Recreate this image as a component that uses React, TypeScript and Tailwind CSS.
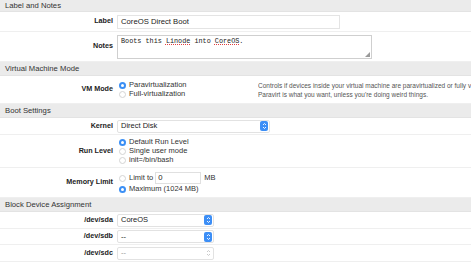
import React from "react";

const Header: React.FC<{ title: string; h?: string }> = ({ title, h = "h-[14px]" }) => (
  <div className={`${h} bg-[#ebebeb] border-b border-[#e3e3e3] pl-[5px] flex items-center text-[7.7px] text-[#333]`}>
    {title}
  </div>
);

const Row: React.FC<{ label: string; h: string; children: React.ReactNode }> = ({ label, h, children }) => (
  <div className={`${h} flex items-center border-b border-[#efefef]`}>
    <div className="w-[113px] shrink-0 text-right font-bold text-[7.2px] text-[#222]">{label}</div>
    <div className="pl-[4px] flex-1 min-w-0">{children}</div>
  </div>
);

const Radio: React.FC<{ on?: boolean; label: string }> = ({ on, label }) => (
  <div className="flex items-center h-[9px] pl-[2px]">
    {on ? (
      <span className="w-[7px] h-[7px] rounded-full bg-[#3b8ff5] flex items-center justify-center">
        <span className="w-[3px] h-[3px] rounded-full bg-white" />
      </span>
    ) : (
      <span className="w-[7px] h-[7px] rounded-full border border-[#d4d4d4] bg-white" />
    )}
    <span className="ml-[3px] text-[7.5px] text-[#333]">{label}</span>
  </div>
);

const Stepper: React.FC<{ off?: boolean }> = ({ off }) => (
  <span
    className={`w-[8px] h-[10px] rounded-[2px] flex items-center justify-center ${
      off ? "bg-transparent" : "bg-[#3c8ef6]"
    }`}
  >
    <svg width="5" height="8" viewBox="0 0 5 8">
      <path d="M1 3 L2.5 1.5 L4 3 M1 5 L2.5 6.5 L4 5" fill="none" stroke={off ? "#c4c4c4" : "#fff"} strokeWidth="0.9" />
    </svg>
  </span>
);

const Select: React.FC<{ value: string; w: string; off?: boolean }> = ({ value, w, off }) => (
  <div className={`${w} h-[13px] border border-[#e2e2e2] bg-white rounded-[2px] flex items-center justify-between pl-[3px] pr-[1px]`}>
    <span className={`text-[7.5px] ${off ? "text-[#999]" : "text-[#222]"}`}>{value}</span>
    <Stepper off={off} />
  </div>
);

export default function App() {
  return (
    <div className="w-[471px] h-[265px] overflow-hidden bg-white" style={{ fontFamily: '"Liberation Sans", Arial, sans-serif' }}>
      <Header title="Label and Notes" h="h-[12px]" />
      <Row label="Label" h="h-[20px]">
        <div className="w-[223px] h-[14px] border border-[#e4e4e4] flex items-center pl-[3px] text-[7.7px] text-[#222]">
          CoreOS Direct Boot
        </div>
      </Row>
      <Row label="Notes" h="h-[30px]">
        <div className="relative w-[255px] h-[24px] border border-[#cfcfcf] pl-[3px] pt-[1px] text-[6.8px] text-[#222] leading-[8px]" style={{ fontFamily: '"Liberation Mono", "Courier New", monospace' }}>
          Boots this <span className="underline decoration-dotted decoration-[#e04040]">Linode</span> into{" "}
          <span className="underline decoration-dotted decoration-[#e04040]">CoreOS</span>.
          <svg className="absolute right-[1px] bottom-[1px]" width="5" height="5" viewBox="0 0 5 5">
            <path d="M5 0 L5 5 L0 5 Z" fill="#9a9a9a" />
          </svg>
        </div>
      </Row>
      <Header title="Virtual Machine Mode" />
      <div className="h-[28px] flex items-center border-b border-[#efefef]">
        <div className="w-[113px] shrink-0 text-right font-bold text-[7.2px] text-[#222]">VM Mode</div>
        <div className="pl-[4px] w-[145px] shrink-0">
          <Radio on label="Paravirtualization" />
          <Radio label="Full-virtualization" />
        </div>
        <div className="flex-1 min-w-0 overflow-hidden text-[6.5px] leading-[9px] text-[#555] whitespace-nowrap">
          <div>Controls if devices inside your virtual machine are paravirtualized or fully vi</div>
          <div>Paravirt is what you want, unless you're doing weird things.</div>
        </div>
      </div>
      <Header title="Boot Settings" />
      <Row label="Kernel" h="h-[17px]">
        <Select value="Direct Disk" w="w-[153px]" />
      </Row>
      <Row label="Run Level" h="h-[33px]">
        <Radio on label="Default Run Level" />
        <Radio label="Single user mode" />
        <Radio label="init=/bin/bash" />
      </Row>
      <Row label="Memory Limit" h="h-[30px]">
        <div className="flex items-center h-[13px]">
          <Radio label="Limit to" />
          <div className="ml-[2px] w-[46px] h-[12px] border border-[#e0e0e0] pl-[2px] text-[7.7px] text-[#222] flex items-center">0</div>
          <span className="ml-[3px] text-[7.5px] text-[#333]">MB</span>
        </div>
        <Radio on label="Maximum (1024 MB)" />
      </Row>
      <Header title="Block Device Assignment" />
      <Row label="/dev/sda" h="h-[17px]">
        <Select value="CoreOS" w="w-[97px]" />
      </Row>
      <Row label="/dev/sdb" h="h-[16px]">
        <Select value="--" w="w-[97px]" />
      </Row>
      <Row label="/dev/sdc" h="h-[17px]">
        <Select value="--" w="w-[97px]" off />
      </Row>
    </div>
  );
}
